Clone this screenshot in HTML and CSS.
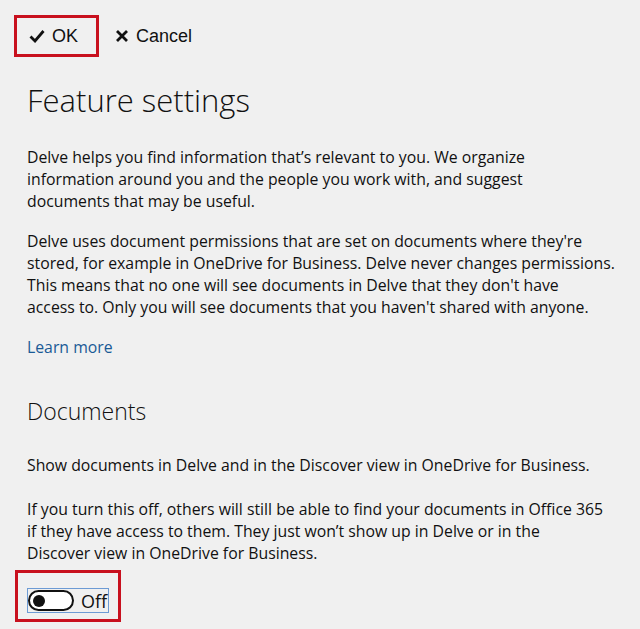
FILE: index.html
```html
<html>
<head>
<title>Feature settings</title>
<link rel="stylesheet" href="styles.css">
</head>
<body>

<div class="cmdbar">
<a class="cmd ok highlight" href="#">
<svg class="ico" width="16" height="14" viewBox="0 0 16 14"><path d="M1.5 7.5 L6 12 L14.5 2" fill="none" stroke="#111" stroke-width="2.8"/></svg>
OK
</a>
<a class="cmd cancel" href="#">
<svg class="ico" width="14" height="14" viewBox="0 0 14 14"><path d="M2 2 L12 12 M12 2 L2 12" fill="none" stroke="#111" stroke-width="2.8"/></svg>
Cancel
</a>
</div>

<div class="panel">
<h1>Feature settings</h1>

<p>Delve helps you find information that’s relevant to you. We organize<br>
information around you and the people you work with, and suggest<br>
documents that may be useful.</p>

<p>Delve uses document permissions that are set on documents where they're<br>
stored, for example in OneDrive for Business. Delve never changes permissions.<br>
This means that no one will see documents in Delve that they don't have<br>
access to. Only you will see documents that you haven't shared with anyone.</p>

<p class="more"><a href="#">Learn more</a></p>

<h2>Documents</h2>

<p class="show">Show documents in Delve and in the Discover view in OneDrive for Business.</p>

<p class="note">If you turn this off, others will still be able to find your documents in Office 365<br>
if they have access to them. They just won’t show up in Delve or in the<br>
Discover view in OneDrive for Business.</p>
</div>

<div class="togglewrap highlight">
<span class="focus">
<span class="toggle"><span class="knob"></span></span>
<span class="state">Off</span>
</span>
</div>

</body>
</html>
```

FILE: styles.css
```css
body {
	margin: 0;
	padding: 0;
	background: #f0f0f0;
	color: #111;
	font-family: "Open Sans", "Noto Sans", sans-serif;
	font-size: 15.8px;
}
.cmdbar {
	display: flex;
	align-items: center;
	gap: 16px;
	padding: 15px 0 0 14px;
	height: 42px;
}
.cmd {
	display: flex;
	align-items: center;
	gap: 7px;
	color: #111;
	text-decoration: none;
	font-family: "Liberation Sans", sans-serif;
	font-size: 18px;
}
.highlight {
	border: 3px solid #c8101e;
}
.cmd.ok {
	box-sizing: border-box;
	height: 42px;
	width: 85px;
	padding-left: 12px;
}
.panel {
	padding: 0 4px 0 27px;
	white-space: nowrap;
}
h1 {
	font-weight: 300;
	font-size: 31px;
	line-height: 40px;
	margin: 23px 0 26px;
}
h2 {
	font-weight: 300;
	font-size: 23px;
	line-height: 32px;
	margin: 37px 0 27px;
}
p {
	line-height: 22px;
	margin: 0 0 18px;
}
p.show {
	margin-bottom: 22px;
}
p.note {
	margin-bottom: 6px;
}
.more a {
	color: #1a5a96;
	text-decoration: none;
}
.togglewrap {
	box-sizing: border-box;
	margin-left: 15px;
	width: 106px;
	height: 52px;
	padding: 15px 0 0 9px;
}
.focus {
	display: inline-flex;
	align-items: center;
	gap: 7px;
	border: 1px solid #6d9bd4;
	padding: 1px 1px 1px 0;
}
.toggle {
	box-sizing: border-box;
	width: 46px;
	height: 21px;
	border: 2.5px solid #111;
	border-radius: 11px;
	background: #fff;
	display: flex;
	align-items: center;
	padding-left: 3px;
}
.knob {
	width: 12px;
	height: 12px;
	border-radius: 50%;
	background: #111;
}
.state {
	font-size: 18px;
	line-height: 20px;
}
```
